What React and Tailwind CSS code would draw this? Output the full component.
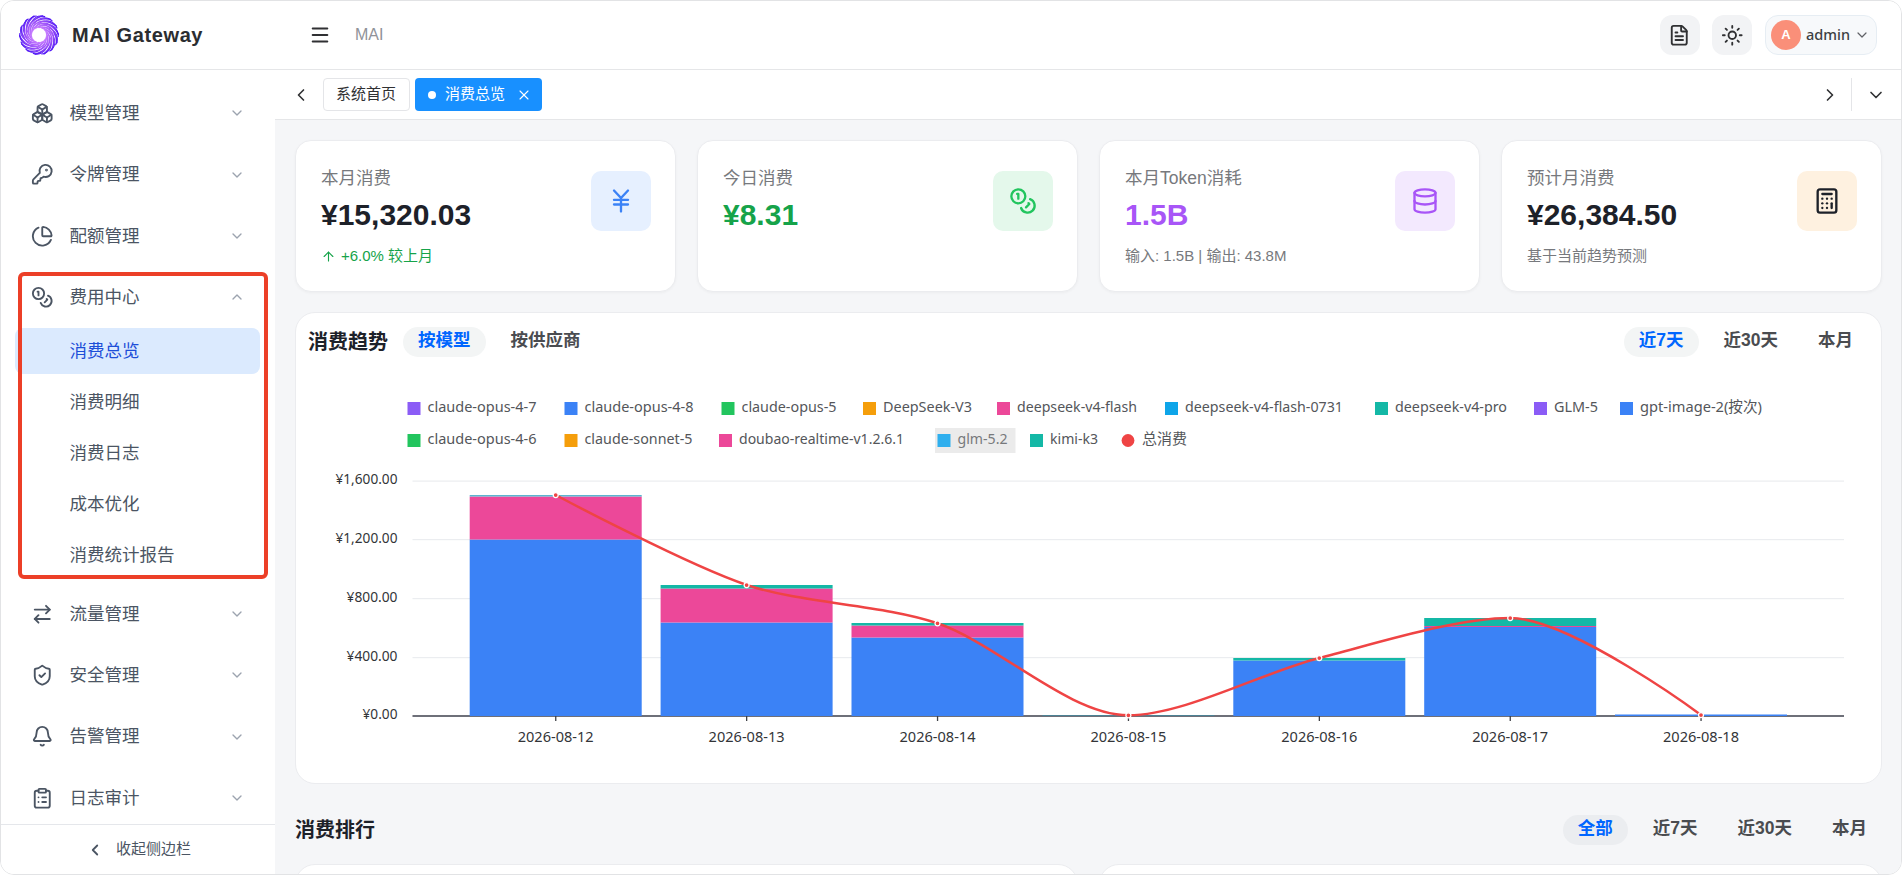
import React, { useState } from 'react';
import {
  ArrowRightLeft, ArrowUp, Bell, Boxes, Calculator, ChartPie, ChevronDown, ChevronLeft, ChevronRight, ChevronUp,
  ClipboardList, Coins, Database, FileText, JapaneseYen, KeyRound, Menu, ShieldCheck, Sun, X,
} from 'lucide-react';

// 1. STATIC DATA
const MENU_TOP = [
  { label: '模型管理', icon: Boxes },
  { label: '令牌管理', icon: KeyRound },
  { label: '配额管理', icon: ChartPie },
];
const COST_ITEMS = ['消费总览', '消费明细', '消费日志', '成本优化', '消费统计报告'];
const MENU_BOTTOM = [
  { label: '流量管理', icon: ArrowRightLeft },
  { label: '安全管理', icon: ShieldCheck },
  { label: '告警管理', icon: Bell },
  { label: '日志审计', icon: ClipboardList },
];

const CARDS = [
  { label: '本月消费', value: '¥15,320.03', color: 'text-[#1d2129]', sub: '+6.0% 较上月', up: true, icon: JapaneseYen, box: 'bg-[#e6f0ff] text-[#3b82f6]' },
  { label: '今日消费', value: '¥8.31', color: 'text-[#16a34a]', icon: Coins, box: 'bg-[#e4f8eb] text-[#22c55e]' },
  { label: '本月Token消耗', value: '1.5B', color: 'text-[#a855f7]', sub: '输入: 1.5B | 输出: 43.8M', icon: Database, box: 'bg-[#f3e9fe] text-[#a855f7]' },
  { label: '预计月消费', value: '¥26,384.50', color: 'text-[#1d2129]', sub: '基于当前趋势预测', icon: Calculator, box: 'bg-[#fef1e0] text-[#1d2129]' },
];

// legend entries: [name, colour, swatch x, row, text width]
const LEGEND = [
  ['claude-opus-4-7', '#8b5cf6', 407.5, 0, 109],
  ['claude-opus-4-8', '#3b82f6', 564.5, 0, 109],
  ['claude-opus-5', '#22c55e', 721.5, 0, 95],
  ['DeepSeek-V3', '#f59e0b', 863, 0, 89],
  ['deepseek-v4-flash', '#ec4899', 997, 0, 120],
  ['deepseek-v4-flash-0731', '#0ea5e9', 1165, 0, 158],
  ['deepseek-v4-pro', '#14b8a6', 1375, 0, 112],
  ['GLM-5', '#8b5cf6', 1534, 0, 44],
  ['gpt-image-2(按次)', '#3b82f6', 1620, 0, 122],
  ['claude-opus-4-6', '#22c55e', 407.5, 1, 109],
  ['claude-sonnet-5', '#f59e0b', 564.5, 1, 108],
  ['doubao-realtime-v1.2.6.1', '#ec4899', 719, 1, 165],
  ['glm-5.2', '#2fafee', 937.5, 1, 50],
  ['kimi-k3', '#14b8a6', 1030, 1, 48],
];

const BASE = 716;
const DAYS = [
  { date: '2026-08-12', x: 555.7, total: 495, stack: [['#3b82f6', 539.5], ['#ec4899', 496.5], ['#5bb5d0', 495]] },
  { date: '2026-08-13', x: 746.6, total: 585, stack: [['#3b82f6', 622.5], ['#ec4899', 588.5], ['#14b8a6', 585]] },
  { date: '2026-08-14', x: 937.5, total: 623.3, stack: [['#3b82f6', 637.5], ['#ec4899', 625.5], ['#14b8a6', 623]] },
  { date: '2026-08-15', x: 1128.4, total: 715.3, stack: [['#4c8294', 715]] },
  { date: '2026-08-16', x: 1319.3, total: 658, stack: [['#3b82f6', 660.5], ['#14b8a6', 658]] },
  { date: '2026-08-17', x: 1510.2, total: 618, stack: [['#3b82f6', 627], ['#ec4899', 626], ['#14b8a6', 618]] },
  { date: '2026-08-18', x: 1701, total: 715, stack: [['#3b82f6', 714.5]] },
];
const GRID = [['¥1,600.00', 481, 62], ['¥1,200.00', 539.5, 62], ['¥800.00', 598.5, 51], ['¥400.00', 657.5, 51], ['¥0.00', 716, 35]];

// 2. CHART HELPERS
const clamp = (v, a, b) => Math.max(Math.min(a, b), Math.min(Math.max(a, b), v));

const smoothPath = (pts, smooth) => {
  let d = `M${pts[0][0]} ${pts[0][1]}`;
  let c0 = pts[0];
  for (let i = 1; i < pts.length; i++) {
    const [x, y] = pts[i];
    const prev = pts[i - 1];
    const next = pts[i + 1];
    let c1 = [x, y];
    let nextC0 = [x, y];
    if (next) {
      const lp = Math.hypot(x - prev[0], y - prev[1]);
      const ln = Math.hypot(next[0] - x, next[1] - y);
      const ratio = ln / (ln + lp);
      const n = [0, 1].map(k => clamp(pts[i][k] + (next[k] - prev[k]) * smooth * ratio, pts[i][k], next[k]));
      c1 = [0, 1].map(k => clamp(pts[i][k] - (n[k] - pts[i][k]) * lp / ln, pts[i][k], prev[k]));
      nextC0 = [0, 1].map(k => pts[i][k] + (pts[i][k] - c1[k]) * ln / lp);
    }
    d += ` C${c0[0]} ${c0[1]} ${c1[0]} ${c1[1]} ${x} ${y}`;
    c0 = nextC0;
  }
  return d;
};

const TrendChart = () => (
  <svg viewBox="296 371 1585 411" className="block w-full h-[411px] font-['Noto_Sans','Noto_Sans_CJK_SC',sans-serif] text-[14.5px]">
    <rect x="935" y="428" width="80.5" height="25" fill="#ebebeb" />
    {LEGEND.map(([name, color, x, row, width]) => (
      <g key={name}>
        <rect x={x} y={402 + row * 32} width="13" height="13" fill={color} />
        <text x={x + 20} y={412 + row * 32} textLength={width} lengthAdjust="spacingAndGlyphs" fill={name === 'glm-5.2' ? '#77797c' : '#54565a'}>{name}</text>
      </g>
    ))}
    <circle cx="1128" cy="440.5" r="6.4" fill="#ef4444" />
    <text x="1142" y="444" textLength="45" lengthAdjust="spacingAndGlyphs" fill="#54565a">总消费</text>

    {GRID.map(([label, y, width]) => (
      <g key={label}>
        <rect x="412.5" y={y - 0.5} width="1431.5" height="1.2" fill="#ebedf0" />
        <text x={397.5 - width} y={y + 3.2} textLength={width} lengthAdjust="spacingAndGlyphs" fill="#333538">{label}</text>
      </g>
    ))}
    <rect x="412.5" y="715" width="1431.5" height="2" fill="#6e7079" />
    {DAYS.map(({ date, x, stack }) => (
      <g key={date}>
        {stack.map(([color, top], i) => {
          const bottom = i ? stack[i - 1][1] : BASE;
          return <rect key={color} x={x - 86} y={top} width="172" height={bottom - top} fill={color} />;
        })}
        <rect x={x - 0.6} y="716" width="1.3" height="5" fill="#3f4146" />
        <text x={x - 38} y="742" textLength="76" lengthAdjust="spacingAndGlyphs" fill="#333538">{date}</text>
      </g>
    ))}
    <path d={smoothPath(DAYS.map(p => [p.x, p.total]), 0.3)} fill="none" stroke="#ef4444" strokeWidth="2.5" />
    {DAYS.map(p => <circle key={p.date} cx={p.x} cy={p.total} r="2.5" fill="#ef4444" stroke="#fff" strokeWidth="1.25" />)}
  </svg>
);

// 3. LAYOUT PARTS
const Logo = () => (
  <svg viewBox="-20 -20 40 40" className="size-10">
    <defs>
      <radialGradient id="swirl" gradientUnits="userSpaceOnUse" cx="0" cy="0" r="20">
        <stop offset="0.35" stopColor="#c77dff" />
        <stop offset="0.7" stopColor="#9a4ff8" />
        <stop offset="1" stopColor="#4a12f5" />
      </radialGradient>
    </defs>
    {Array.from({ length: 14 }, (_, i) => (
      <g key={i} transform={`rotate(${i * 25.714})`} fill="none" stroke="url(#swirl)" strokeLinecap="round">
        <path d="M-3 -7A11.5 11.5 0 0 1 14.5 -3.5Q18 2 17.8 7.8" strokeWidth="1.5" />
        <path d="M-1 -7.4A13 13 0 0 1 16.5 -7Q19.6 -3.5 19.2 1.5" strokeWidth="1.1" />
      </g>
    ))}
  </svg>
);

const Header = () => (
  <header className="h-[69px] shrink-0 flex items-center bg-white border-b border-[#e5e6e8] pl-[18px] pr-6">
    <Logo />
    <span className="ml-[13px] w-[239px] text-xl font-bold tracking-[0.6px] text-[#2b2d31]">MAI Gateway</span>
    <Menu className="size-[22px] ml-[-2px] text-[#303133]" strokeWidth={2.1} />
    <span className="ml-6 text-base text-[#909399]">MAI</span>
    <div className="ml-auto flex items-center gap-3">
      <button className="size-10 rounded-xl bg-[#f2f3f5] flex items-center justify-center text-[#303133]"><FileText size={22.5} strokeWidth={2} className="-ml-px" /></button>
      <button className="size-10 rounded-xl bg-[#f2f3f5] flex items-center justify-center text-[#303133]"><Sun size={22.5} strokeWidth={2} /></button>
      <button className="ml-px h-10 w-28 rounded-[13px] bg-[#f7f9fb] border border-[#e6edf3] flex items-center pl-[5px]">
        <span className="size-[30px] rounded-full bg-[#fa8f79] text-white text-[13px] font-bold flex items-center justify-center">A</span>
        <span className="ml-[5px] text-[14.5px] font-medium text-[#3d3f43] font-['Noto_Sans',sans-serif]">admin</span>
        <ChevronDown className="size-4 ml-1 text-[#606266]" strokeWidth={1.8} />
      </button>
    </div>
  </header>
);

const MenuItem = ({ label, icon: Icon, open }) => (
  <div className="h-[61.4px] shrink-0 flex items-center pl-[30px] pr-[30px] text-[#4b5563]">
    <Icon size={22.5} strokeWidth={2} />
    <span className="ml-4 text-[17.5px]">{label}</span>
    {open
      ? <ChevronUp className="size-4 ml-auto text-[#9ca3af]" strokeWidth={2} />
      : <ChevronDown className="size-4 ml-auto text-[#9ca3af]" strokeWidth={2} />}
  </div>
);

const Sidebar = () => (
  <aside className="w-[274px] shrink-0 flex flex-col bg-white">
    <div className="relative grow min-h-0 overflow-hidden pt-[12.5px] flex flex-col">
      {MENU_TOP.map(m => <MenuItem key={m.label} {...m} />)}
      <MenuItem label="费用中心" icon={Coins} open />
      <div className="h-[255px] shrink-0 flex flex-col gap-[5px] pl-[14px] pr-[15px]">
        {COST_ITEMS.map((label, i) => (
          <div key={label} className={`h-[46px] shrink-0 flex items-center pl-[54.5px] pt-px rounded-lg text-[17.5px] ${i ? 'text-[#4b5563]' : 'bg-[#dbeafe] text-[#1d4ed8]'}`}>{label}</div>
        ))}
      </div>
      {MENU_BOTTOM.map(m => <MenuItem key={m.label} {...m} />)}
      <div className="absolute left-[17px] top-[202px] w-[250px] h-[307px] border-4 border-[#ec3f27] rounded-md" />
    </div>
    <button className="h-[50px] shrink-0 border-t border-[#e5e7eb] flex items-center justify-center gap-3 pl-px text-[15px] text-[#4b5563]">
      <ChevronLeft className="size-[18px]" strokeWidth={2.4} />
      <span>收起侧边栏</span>
    </button>
  </aside>
);

const TabBar = () => (
  <div className="h-[50px] shrink-0 flex items-center bg-white border-b border-[#e5e6e8] pl-4 pr-[15px] text-[#303133]">
    <ChevronLeft className="size-5" strokeWidth={2} />
    <span className="ml-3 w-[87px] h-[33px] rounded-[4px] border border-[#e4e5e8] flex items-center justify-center text-[15px] pb-px pr-px">系统首页</span>
    <span className="ml-[5px] w-[127px] h-[33px] rounded-[4px] bg-[#1890ff] text-white flex items-center pl-[13px] text-[15px]">
      <i className="size-2 rounded-full bg-white" />
      <span className="ml-[9px] pb-px">消费总览</span>
      <X className="size-4 ml-[11px]" strokeWidth={1.6} />
    </span>
    <ChevronRight className="size-5 ml-auto" strokeWidth={2} />
    <span className="ml-[11px] w-px h-[33px] bg-[#e4e5e8]" />
    <ChevronDown className="size-5 ml-[14px]" strokeWidth={2} />
  </div>
);

const StatCard = ({ label, value, color, sub, up, icon: Icon, box }) => (
  <div className="h-[152px] bg-white rounded-2xl border border-[#ebecef] shadow-[0_1px_3px_rgba(0,0,0,0.04)] pl-[25px] pr-6 pt-[22px] flex justify-between">
    <div className="flex flex-col">
      <span className="h-[30px] flex items-center text-[17.5px] text-[#77797d]">{label}</span>
      <span className={`h-[42px] flex items-center text-[30px] font-bold ${color}`}>{value}</span>
      {sub && (
        <span className={`mt-[9px] h-6 flex items-center text-[15px] ${up ? 'text-[#16a34a]' : 'text-[#77797d]'}`}>
          {up && <ArrowUp className="size-[15px] mr-[5px]" strokeWidth={1.8} />}{sub}
        </span>
      )}
    </div>
    <div className={`mt-2 size-[60px] rounded-[10px] flex items-center justify-center ${box}`}><Icon size={28} strokeWidth={2} /></div>
  </div>
);

const Pills = ({ items, activeBg }) => {
  const [active, setActive] = useState(items[0]);
  return (
    <div className="flex gap-[10px]">
      {items.map(t => (
        <button key={t} onClick={() => setActive(t)} className={`h-[30px] px-[15px] pb-0.5 rounded-full text-[17.5px] leading-none font-bold ${t === active ? `${activeBg} text-[#0066ff]` : 'text-[#4a4c50]'}`}>{t}</button>
      ))}
    </div>
  );
};

// 4. PAGE
export default function App() {
  return (
    <div className="w-[1902px] h-[875px] flex flex-col overflow-hidden bg-white border border-[#e2e3e5] rounded-[14px] font-['Liberation_Sans','Noto_Sans_CJK_SC',sans-serif]">
      <Header />
      <div className="flex grow min-h-0">
        <Sidebar />
        <main className="grow min-w-0 flex flex-col bg-[#f5f6f8]">
          <TabBar />
          <div className="grow min-h-0 overflow-hidden pt-5 pl-5 pr-[19px]">
            <div className="grid grid-cols-4 gap-[21px]">
              {CARDS.map(c => <StatCard key={c.label} {...c} />)}
            </div>

            <section className="mt-5 h-[472px] bg-white rounded-[20px] border border-[#ebecef]">
              <div className="h-[58px] flex items-center pl-3 pr-[13px]">
                <h2 className="text-xl font-bold text-[#1d2129] mr-[15px]">消费趋势</h2>
                <Pills items={['按模型', '按供应商']} activeBg="bg-[#f3f5f5]" />
                <div className="ml-auto"><Pills items={['近7天', '近30天', '本月']} activeBg="bg-[#f3f5f5]" /></div>
              </div>
              <TrendChart />
            </section>

            <div className="h-[80px] flex items-center justify-between pt-[11px]">
              <h2 className="text-xl font-bold text-[#1d2129]">消费排行</h2>
              <Pills items={['全部', '近7天', '近30天', '本月']} activeBg="bg-[#ebedf0]" />
            </div>

            <div className="grid grid-cols-2 gap-[21px]">
              <div className="h-40 bg-white rounded-[20px] border border-[#ebecef]" />
              <div className="h-40 bg-white rounded-[20px] border border-[#ebecef]" />
            </div>
          </div>
        </main>
      </div>
    </div>
  );
}
